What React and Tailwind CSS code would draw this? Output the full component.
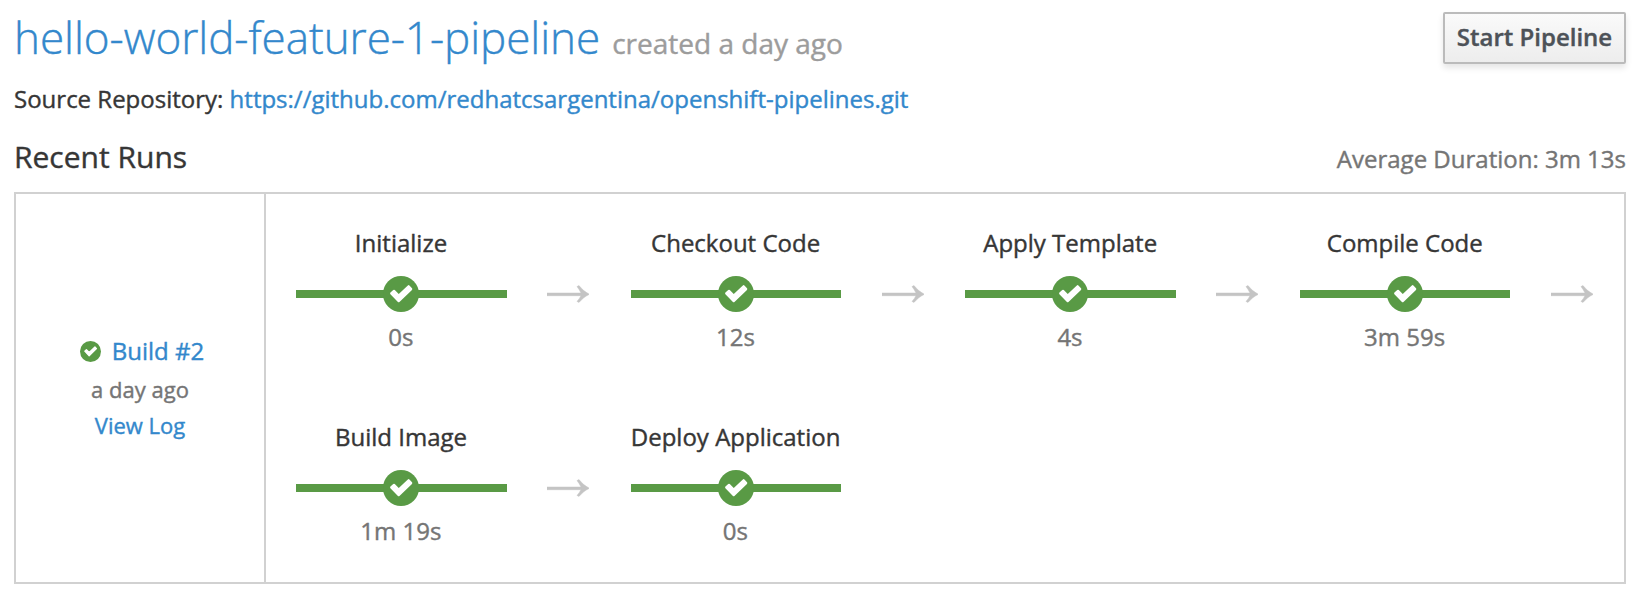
const stages = [
  { name: 'Initialize', time: '0s', arrow: true },
  { name: 'Checkout Code', time: '12s', arrow: true },
  { name: 'Apply Template', time: '4s', arrow: true },
  { name: 'Compile Code', time: '3m 59s', arrow: true },
  { name: 'Build Image', time: '1m 19s', arrow: true },
  { name: 'Deploy Application', time: '0s', arrow: false },
];

function CheckCircle({ className }) {
  return (
    <svg className={className} viewBox="0 0 36 36" aria-hidden="true">
      <circle cx="18" cy="18" r="18" fill="#599a45" />
      <path d="M8.2 17.4L11 14.8L15.7 19.6L25.6 10.2L28.2 13.1L15.7 25.2Z" fill="#fff" stroke="#fff" strokeWidth="2.2" strokeLinejoin="round" />
    </svg>
  );
}

function Arrow() {
  return (
    <svg className="ml-[40.5px] h-[18px] w-[42px] shrink-0" viewBox="0 0 42 18" aria-hidden="true">
      <path d="M0 8H34C33 5.8 31.6 3.6 30 1.6L32 .6C35.2 4.4 38.3 7.2 42 9V9.5C38.3 11.3 35.2 13.8 32 17.4L30 16.4C31.6 14.6 33 12.8 34 10.7H0Z" fill="#c4c4c4" stroke="#c4c4c4" strokeWidth=".5" />
    </svg>
  );
}

function Stage({ name, time, arrow }) {
  return (
    <div className="h-[194px] w-[334.6px] pl-[20px] pt-[24px]">
      <div className="w-[210px] whitespace-nowrap text-center text-[24px] leading-8 text-[#363636]">{name}</div>
      <div className="mt-[17px] flex h-9 items-center">
        <div className="flex h-2 w-[210.6px] shrink-0 items-center justify-center bg-[#599a45]">
          <CheckCircle className="h-9 w-9 shrink-0" />
        </div>
        {arrow && <Arrow />}
      </div>
      <div className="mt-[9px] w-[209.6px] text-center text-[24px] leading-8 text-[#757575]">{time}</div>
    </div>
  );
}

export default function App() {
  return (
    <div className="h-[598px] w-[1640px] overflow-hidden bg-white px-[14px] pt-3 font-['Open_Sans',sans-serif] text-[#363636] [-webkit-text-stroke:0.4px]">
      <header className="flex h-[68px] items-start justify-between">
        <h1 className="flex items-baseline whitespace-nowrap leading-[50px]">
          <a className="text-[44px] font-light tracking-[-0.05px] text-[#3388cc]">hello-world-feature-1-pipeline</a>
          <small className="ml-3 text-[28px] text-[#9c9c9c]">created a day ago</small>
        </h1>
        <button className="h-[52px] w-[183px] whitespace-nowrap rounded-[2px] border-2 border-[#bbb] bg-linear-to-b from-[#fafafa] to-[#ededed] pb-[2px] text-[24px] font-semibold leading-8 text-[#4d5258] shadow-[0_4px_6px_rgba(3,3,3,0.1)]">
          Start Pipeline
        </button>
      </header>
      <div className="mt-[3px] whitespace-nowrap text-[24px] leading-8">
        Source Repository: <a className="text-[#3388cc]">https://github.com/redhatcsargentina/openshift-pipelines.git</a>
      </div>
      <div className="mt-[22px] flex h-[55px] items-baseline justify-between">
        <h2 className="text-[30px] leading-10">Recent Runs</h2>
        <span className="text-[24px] text-[#757575]">Average Duration: 3m 13s</span>
      </div>
      <section className="flex h-[392px] border-2 border-[#d1d1d1]">
        <aside className="flex w-[250px] flex-col items-center border-r-2 border-[#d1d1d1] pt-[141px]">
          <div className="flex items-center pl-1 text-[24px] leading-8 text-[#3388cc]">
            <CheckCircle className="mr-[11px] h-[21px] w-[21px]" />
            Build #2
          </div>
          <div className="mt-[6px] text-[22px] leading-8 text-[#757575]">a day ago</div>
          <a className="mt-1 text-[22px] leading-8 text-[#3388cc]">View Log</a>
        </aside>
        <div className="flex w-[1358px] flex-wrap content-start pl-[10px] pt-[9px]">
          {stages.map((s) => (
            <Stage key={s.name} {...s} />
          ))}
        </div>
      </section>
    </div>
  );
}
